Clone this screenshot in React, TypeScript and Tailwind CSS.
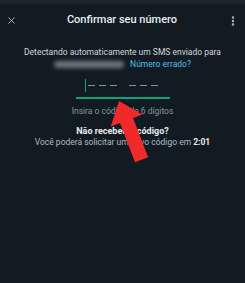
import { X, EllipsisVertical } from "lucide-react";

function Dashes() {
  return (
    <div className="flex items-center gap-[4px]">
      {[0, 1, 2].map((i) => (
        <span key={i} className="h-[1.5px] w-[7px] bg-[#8696a0]" />
      ))}
    </div>
  );
}

export default function App() {
  return (
    <div
      className="relative flex h-[283px] w-[245px] flex-col overflow-hidden bg-[#111b21] text-[#d1d7db]"
      style={{ fontFamily: "Roboto, 'Noto Sans', sans-serif" }}
    >
      <div className="h-[4px] bg-[#1a252c]" />

      <header className="flex h-[33px] items-center justify-between px-[6px]">
        <X className="h-[11px] w-[11px] text-[#aebac1]" strokeWidth={2} />
        <h1 className="text-[11px] font-medium text-[#e9edef]">
          Confirmar seu número
        </h1>
        <EllipsisVertical
          className="h-[12px] w-[12px] text-[#aebac1]"
          strokeWidth={3}
        />
      </header>

      <div className="mt-[10px] flex flex-col items-center">
        <p className="text-[8.5px] leading-[11px]">
          Detectando automaticamente um SMS enviado para
        </p>
        <div className="mt-[1px] flex items-center gap-[6px] leading-[11px]">
          <span className="h-[7px] w-[70px] rounded-full bg-[#c9cfd3]/50 blur-[2px]" />
          <span className="text-[8.5px] text-[#53bdeb]">Número errado?</span>
        </div>

        <div className="mt-[7px] flex w-[94px] flex-col">
          <div className="flex h-[17px] items-center pl-[9px]">
            <span className="mr-[2px] h-[13px] w-[1.5px] bg-[#00a884]" />
            <Dashes />
            <span className="w-[12px]" />
            <Dashes />
          </div>
          <div className="mt-[3px] h-[1.5px] w-full bg-[#00a884]" />
        </div>

        <p className="mt-[7px] text-[8.5px] leading-[11px] text-[#8696a0]">
          Insira o código de 6 dígitos
        </p>

        <p className="mt-[8px] text-[9px] font-bold leading-[12px] text-[#e9edef]">
          Não recebeu o código?
        </p>
        <p className="text-[8.5px] leading-[11px] text-[#aebac1]">
          Você poderá solicitar um novo código em{" "}
          <span className="font-bold text-[#e9edef]">2:01</span>
        </p>
      </div>

      <svg
        className="pointer-events-none absolute left-0 top-0"
        width="245"
        height="283"
        viewBox="0 0 245 283"
      >
        <polygon
          transform="translate(119 101) rotate(-21)"
          points="0,0 17,21 7,21 7,63 -7,63 -7,21 -17,21"
          fill="#f02a2a"
        />
      </svg>
    </div>
  );
}
